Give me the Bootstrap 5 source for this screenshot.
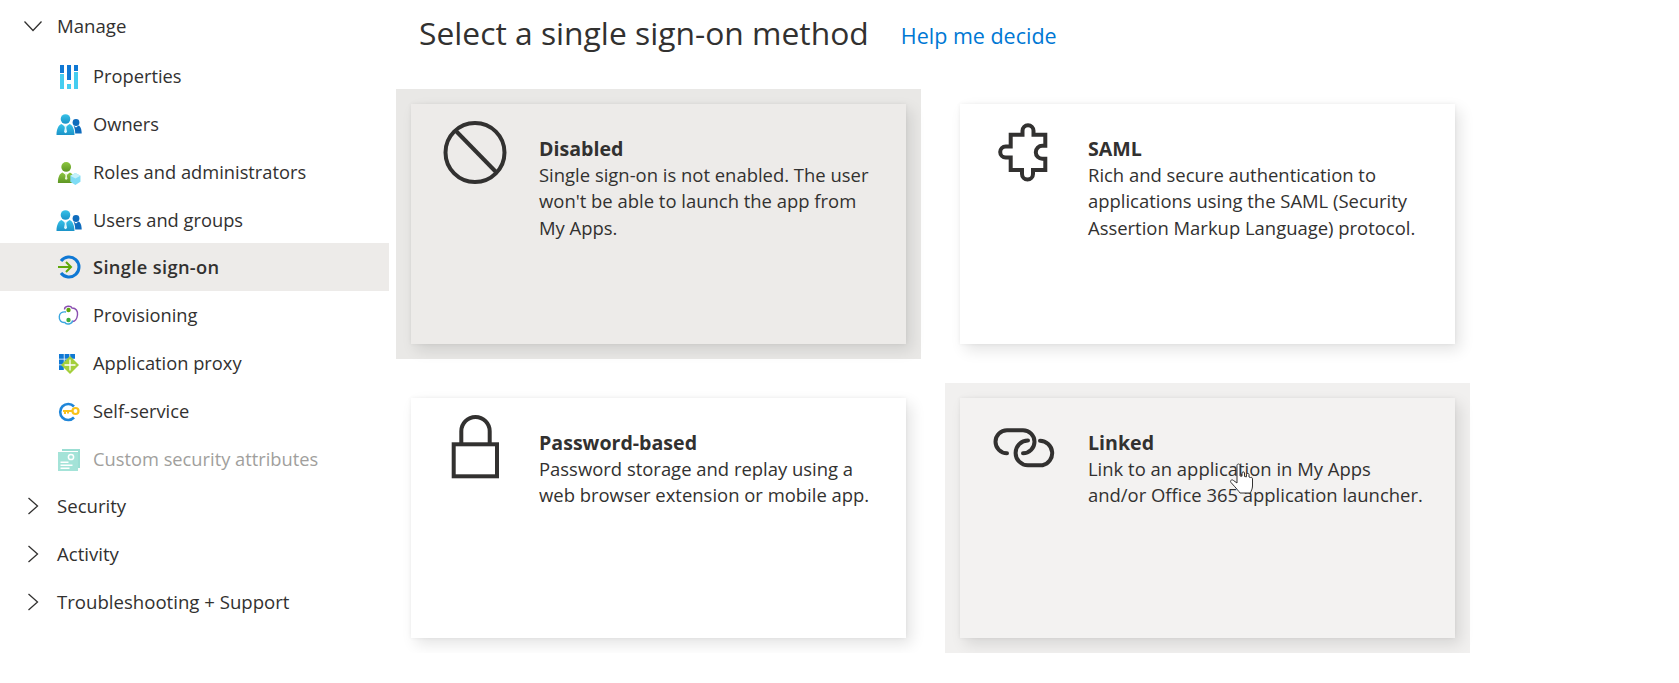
<!DOCTYPE html>
<html lang="en">
<head>
  <meta charset="UTF-8" />
  <meta name="viewport" content="width=device-width, initial-scale=1.0" />
  <title>Select a single sign-on method</title>
  <link href="https://cdn.jsdelivr.net/npm/bootstrap@5.3.6/dist/css/bootstrap.min.css" rel="stylesheet">
  <style>
    body {
      font-family: 'Open Sans', 'Noto Sans', sans-serif;
      color: #323130;
      background-color: #fff;
      overflow: hidden;
    }
    .side-menu {
      width: 389px;
      flex: none;
      padding-top: 2px;
    }
    .menu-row {
      height: 48px;
      font-size: 18.3px;
      color: #323130;
      background: transparent;
      border: 0;
      padding: 0;
    }
    .menu-row.active {
      background-color: #edebe9;
      color: #323130;
      font-weight: 600;
      letter-spacing: .35px;
    }
    .menu-row.off {
      color: #a19f9d;
    }
    .menu-group {
      font-size: 18.6px;
    }
    .menu-group svg {
      margin-left: 24px;
      width: 33px;
    }
    .menu-top {
      height: 50px;
      padding-bottom: 2px;
    }
    .menu-item + .menu-group {
      margin-top: -1px;
    }
    .menu-item svg {
      margin-left: 56px;
      margin-right: 12px;
      width: 26px;
      height: 26px;
    }
    .menu-label {
      margin-left: -1px;
    }
    .off svg {
      opacity: .5;
    }
    .sso-main {
      margin-left: 7px;
    }
    .sso-head {
      height: 89px;
      padding-left: 23px;
      padding-bottom: 23px;
    }
    .sso-head h1 {
      font-size: 31.8px;
      font-weight: 400;
      margin: 0;
      color: #323130;
    }
    .sso-head a {
      font-size: 21.5px;
      color: #0078d4;
      text-decoration: none;
      margin-left: 32px;
      margin-top: 6px;
    }
    .sso-grid {
      display: grid;
      grid-template-columns: 525px 525px;
      gap: 24px;
    }
    .method-wrap {
      padding: 15px;
      height: 270px;
    }
    .method-wrap.picked {
      background-color: #e9e8e6;
    }
    .method-wrap.hovered {
      background-color: #f1f0ef;
    }
    .method-card {
      height: 240px;
      background-color: #fff;
      box-shadow: 5px 6px 14px rgba(0, 0, 0, .11), 0 0 4px rgba(0, 0, 0, .06);
      padding: 16px 0 0 30px;
    }
    .picked .method-card {
      background-color: #edebe9;
    }
    .hovered .method-card {
      background-color: #f3f2f1;
    }
    .method-icon {
      width: 68px;
      height: 68px;
      flex: none;
    }
    .method-icon * {
      fill: none;
      stroke: #323130;
      stroke-width: 4;
    }
    .method-text {
      width: 342px;
      flex: none;
      margin-left: 30px;
      padding-top: 16px;
      font-size: 18.45px;
      line-height: 26.8px;
    }
    .method-text strong {
      display: block;
      font-size: 19.6px;
      line-height: 25.6px;
      font-weight: 700;
    }
    .hand-cursor {
      position: absolute;
      left: 269px;
      top: 65px;
      width: 25px;
      height: 31px;
    }
  </style>
</head>
<body>
  <svg width="0" height="0" class="d-block">
    <defs>
      <linearGradient id="cyanBody" x1="0" y1="0" x2="0" y2="1">
        <stop offset="0" stop-color="#37c2e8" /><stop offset="1" stop-color="#1b93c8" />
      </linearGradient>
      <linearGradient id="greenBody" x1="0" y1="0" x2="0" y2="1">
        <stop offset="0" stop-color="#8cc63f" /><stop offset="1" stop-color="#5e9624" />
      </linearGradient>
      <symbol id="ico-users" viewBox="0 0 26 26">
        <circle cx="9.500" cy="8" r="4.800" fill="url(#cyanBody)" />
        <path d="M.5 24c0-6 2-10 5-11l4 3 4-3c3 1 5 5 5 11z" fill="url(#cyanBody)" />
        <path d="M8.400 14.500h2.200l-.3 2.500.8 4-1.600 1.200L8 21l.8-4z" fill="#dff6fd" />
        <circle cx="20" cy="11.500" r="3.400" fill="#0f6cbd" />
        <path d="M17.500 14.500l2.500 2 2.500-2c2 .6 3.200 4 3.200 8h-6.500c0-2.500-.5-5.500-1.700-8z" fill="#0f6cbd" />
      </symbol>
    </defs>
  </svg>

  <div class="d-flex">
    <aside class="side-menu">
      <div class="list-group list-group-flush">
        <div class="list-group-item menu-row menu-group menu-top d-flex align-items-center">
          <svg width="18" height="12" viewBox="0 0 33 12"><path d="M.5 1.500l8.500 9 8.500-9" fill="none" stroke="#323130" stroke-width="1.300" /></svg>
          Manage
        </div>
        <div class="list-group-item menu-row menu-item d-flex align-items-center">
          <svg viewBox="0 0 26 26">
            <path d="M4 2h4v8H4zM11 2h4v15h-4zM18 2h4v6h-4z" fill="#0f78d4" />
            <path d="M4 11h4v15H4zM11 21h4v5h-4zM18 9h4v17h-4z" fill="#45cdf0" />
          </svg>
          <span class="menu-label">Properties</span>
        </div>
        <div class="list-group-item menu-row menu-item d-flex align-items-center">
          <svg><use href="#ico-users" /></svg>
          <span class="menu-label">Owners</span>
        </div>
        <div class="list-group-item menu-row menu-item d-flex align-items-center">
          <svg viewBox="0 0 26 26">
            <g transform="translate(1 2) scale(.92)">
              <circle cx="10" cy="6.500" r="5.300" fill="url(#greenBody)" />
              <path d="M1 24c0-7 2-10.500 5-11.500l4 3 4-3c3 1 5 4.500 5 11.500z" fill="url(#greenBody)" />
              <path d="M8.800 13.500h2.400l-.4 3 .6 3-1.400 1-1.400-1 .6-3z" fill="#e7f5d2" />
              <path d="M20 13l5.500 3v6.500L20 26l-5.500-3.500V16z" fill="#7fdcf5" />
              <path d="M20 13l5.500 3-5.500 3-5.500-3z" fill="#c4f1fb" />
            </g>
          </svg>
          <span class="menu-label">Roles and administrators</span>
        </div>
        <div class="list-group-item menu-row menu-item d-flex align-items-center">
          <svg><use href="#ico-users" /></svg>
          <span class="menu-label">Users and groups</span>
        </div>
        <div class="list-group-item menu-row menu-item active d-flex align-items-center">
          <svg viewBox="0 0 26 26">
            <path d="M5 7A10 10 0 1 1 5 19" fill="none" stroke="#0f78d4" stroke-width="3" />
            <path d="M2 13h13M10 8l5 5-5 5" fill="none" stroke="#5ea80c" stroke-width="2" />
          </svg>
          <span class="menu-label">Single sign-on</span>
        </div>
        <div class="list-group-item menu-row menu-item d-flex align-items-center">
          <svg viewBox="0 0 26 26">
            <path d="M8.500 7.500C8.500 3.500 15 3.500 16 6c4 0 6 3 5.500 7-.5 4-2.500 7-5.500 6.500" fill="none" stroke="#8a4fb0" stroke-width="1.400" />
            <path d="M16.500 18.500C16.500 22.500 10 23 9 20.500c-4 .5-6-2.500-5.700-6C3.500 11 6 9.500 10 10" fill="none" stroke="#3ba6df" stroke-width="1.400" />
            <circle cx="12.500" cy="8" r="2.200" fill="#5ea80c" />
            <circle cx="12.500" cy="18" r="2.200" fill="#3fae3f" />
          </svg>
          <span class="menu-label">Provisioning</span>
        </div>
        <div class="list-group-item menu-row menu-item d-flex align-items-center">
          <svg viewBox="0 0 26 26">
            <path d="M3 4h4.800v4.800H3zM8.600 4h4.800v4.800H8.600zM14.200 4H19v4.800h-4.800zM3 9.600h4.800v4.800H3zM8.600 9.600h4.800v4.800H8.600zM3 15.200h4.800V20H3z" fill="#0f78d4" />
            <path d="M14 6l9 9-9 9-9-9z" fill="#a4cf3c" />
            <path d="M14 9.500v11M8.500 15h11" stroke="#fff" stroke-width="1.300" />
          </svg>
          <span class="menu-label">Application proxy</span>
        </div>
        <div class="list-group-item menu-row menu-item d-flex align-items-center">
          <svg viewBox="0 0 26 26">
            <path d="M18 8.500A8 8 0 1 0 18 19.500" fill="none" stroke="#1f86d9" stroke-width="2.600" />
            <circle cx="19.500" cy="13" r="3" fill="none" stroke="#f8c21c" stroke-width="2.200" />
            <path d="M7 13h9.500M9 13v3M12 13v2.500" fill="none" stroke="#f8c21c" stroke-width="2" />
          </svg>
          <span class="menu-label">Self-service</span>
        </div>
        <div class="list-group-item menu-row menu-item off d-flex align-items-center">
          <svg viewBox="0 0 26 26">
            <path d="M6 3h18v19h-2V5H6z" fill="#39bfa8" />
            <path d="M2 6h20v19H2z" fill="#4bc9b3" />
            <circle cx="15" cy="11" r="2.600" fill="none" stroke="#fff" stroke-width="1.500" />
            <path d="M4.500 15.500h8V17h-8zM4.500 18.500h12V20h-12zM4.500 21.500h9V23h-9z" fill="#fff" />
          </svg>
          <span class="menu-label">Custom security attributes</span>
        </div>
        <div class="list-group-item menu-row menu-group d-flex align-items-center">
          <svg width="11" height="18" viewBox="0 0 33 18"><path d="M4.500 1l9 8-9 8" fill="none" stroke="#323130" stroke-width="1.300" /></svg>
          Security
        </div>
        <div class="list-group-item menu-row menu-group d-flex align-items-center">
          <svg width="11" height="18" viewBox="0 0 33 18"><path d="M4.500 1l9 8-9 8" fill="none" stroke="#323130" stroke-width="1.300" /></svg>
          Activity
        </div>
        <div class="list-group-item menu-row menu-group d-flex align-items-center">
          <svg width="11" height="18" viewBox="0 0 33 18"><path d="M4.500 1l9 8-9 8" fill="none" stroke="#323130" stroke-width="1.300" /></svg>
          Troubleshooting + Support
        </div>
      </div>
    </aside>

    <main class="sso-main flex-grow-1">
      <div class="sso-head d-flex align-items-center">
        <h1>Select a single sign-on method</h1>
        <a href="#">Help me decide</a>
      </div>
      <div class="sso-grid">
        <div class="method-wrap picked">
          <div class="method-card d-flex">
            <svg class="method-icon" viewBox="0 0 68 68">
              <circle cx="34" cy="32.500" r="29.500" />
              <path d="M14 10l42 43" />
            </svg>
            <div class="method-text">
              <strong>Disabled</strong>
              Single sign-on is not enabled. The user won't be able to launch the app from My Apps.
            </div>
          </div>
        </div>
        <div class="method-wrap">
          <div class="method-card d-flex">
            <svg class="method-icon" viewBox="0 0 68 68">
              <path d="M32.500 14.700v-4a5.500 5.500 0 0 1 11 0v4H55.300v11h-3a6.500 6.500 0 0 0 0 13h3V50H43v4a5.500 5.500 0 0 1-11 0v-4H20.700V37.500h-5a5.500 5.500 0 0 1 0-11h5V14.700z" />
            </svg>
            <div class="method-text">
              <strong>SAML</strong>
              Rich and secure authentication to applications using the SAML (Security Assertion Markup Language) protocol.
            </div>
          </div>
        </div>
        <div class="method-wrap">
          <div class="method-card d-flex">
            <svg class="method-icon" viewBox="0 0 68 68">
              <rect x="12.700" y="30.300" width="43.300" height="32" />
              <path d="M20.300 30V17.200a14.200 14.200 0 0 1 28.400 0V30" />
            </svg>
            <div class="method-text">
              <strong>Password-based</strong>
              Password storage and replay using a web browser extension or mobile app.
            </div>
          </div>
        </div>
        <div class="method-wrap hovered">
          <div class="method-card d-flex position-relative">
            <svg class="method-icon" viewBox="0 0 68 68">
              <path d="M17 39.300A11.500 11.500 0 0 1 17 16.300H33A11.500 11.500 0 0 1 33 39.300" stroke-linecap="round" />
              <path d="M50 26.800A12.400 12.400 0 0 1 52.500 51.300H38A12.400 12.400 0 0 1 38 26.500" stroke-linecap="round" />
            </svg>
            <div class="method-text">
              <strong>Linked</strong>
              Link to an application in My Apps and/or Office 365 application launcher.
            </div>
            <svg class="hand-cursor" viewBox="0 0 25 31">
              <path d="M8 2.500c0-2 3-2 3 0V13l2 .2V10c0-1.500 2.500-1.500 2.500 0v3.500l2 .3V11.500c0-1.500 2.500-1.500 2.500 0v2.500l1.500.5c1-.5 2 .2 2 1.500v7c0 3-1.500 5-2 7H11c-1-1.500-4-5-9-10.500-1.500-2 1-3.500 2.500-2L8 20z" fill="#fff" stroke="#323130" stroke-width="1" />
            </svg>
          </div>
        </div>
      </div>
    </main>
  </div>
  <script src="https://cdn.jsdelivr.net/npm/bootstrap@5.3.6/dist/js/bootstrap.bundle.min.js"></script>
</body>
</html>
